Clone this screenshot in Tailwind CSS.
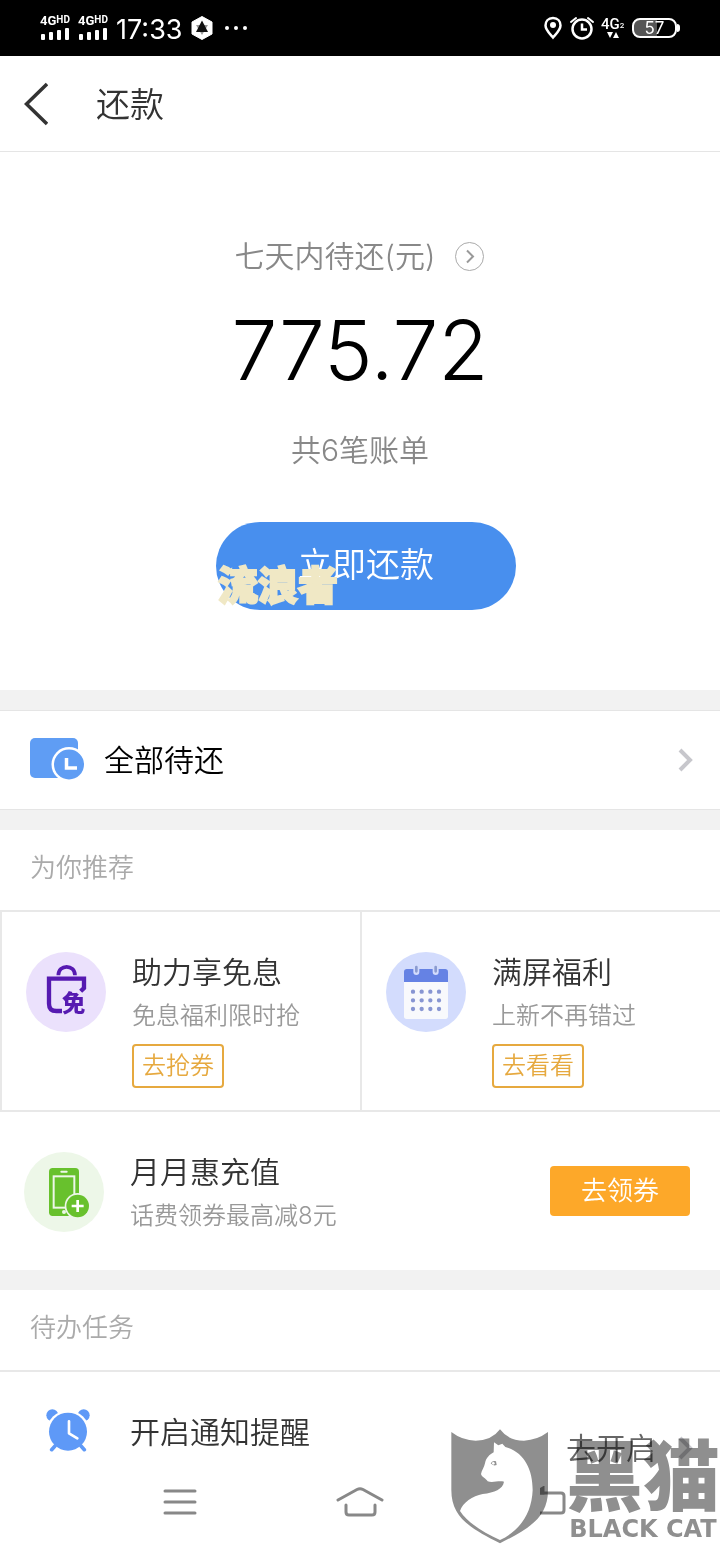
<!DOCTYPE html>
<html lang="zh-CN">
<head>
  <meta charset="UTF-8">
  <meta name="viewport" content="width=device-width, initial-scale=1.0">
  <title>还款</title>
  <script src="https://cdn.jsdelivr.net/npm/@tailwindcss/browser@4"></script>
</head>
<body class="bg-white font-['Inter','Noto_Sans_CJK_SC',sans-serif] font-[350] text-[#333]">

  <!-- Status bar -->
  <div class="flex h-14 items-center justify-between bg-black px-10 text-white">
    <div class="flex items-center gap-2">
      <div class="w-[30px]">
        <p class="flex items-start text-[13px] leading-[12px] font-bold font-['Roboto',sans-serif]">4G<span class="text-[10px] leading-[9px]">HD</span></p>
        <svg class="h-[14px] w-[30px]" viewBox="0 0 30 14" fill="#fff"><rect x="1" y="7" width="4" height="6" rx="1"/><rect x="9" y="5" width="4" height="8" rx="1"/><rect x="17" y="3" width="4" height="10" rx="1"/><rect x="25" y="1" width="4" height="12" rx="1"/></svg>
      </div>
      <div class="w-[30px]">
        <p class="flex items-start text-[13px] leading-[12px] font-bold font-['Roboto',sans-serif]">4G<span class="text-[10px] leading-[9px]">HD</span></p>
        <svg class="h-[14px] w-[30px]" viewBox="0 0 30 14" fill="#fff"><rect x="1" y="7" width="4" height="6" rx="1"/><rect x="9" y="5" width="4" height="8" rx="1"/><rect x="17" y="3" width="4" height="10" rx="1"/><rect x="25" y="1" width="4" height="12" rx="1"/></svg>
      </div>
      <span class="mt-1 text-[27px] leading-8 font-normal">17:33</span>
      <svg class="h-6 w-[22px]" viewBox="0 0 22 24"><path d="M11 0.500 L21 6 V18 L11 23.500 L1 18 V6 Z" fill="#fff" stroke="#fff" stroke-linejoin="round"/><path d="M11 19 L5 9 H17 Z" fill="#999"/><path d="M11 4.500 L17 16 H5 Z" fill="#111"/></svg>
      <svg class="ml-1 h-1 w-6" viewBox="0 0 24 4" fill="#fff"><circle cx="2" cy="2" r="2"/><circle cx="11" cy="2" r="2"/><circle cx="20" cy="2" r="2"/></svg>
    </div>
    <div class="flex items-center gap-[7px]">
      <svg class="h-6 w-5" viewBox="0 0 20 24"><path d="M10 2 C5 2 2.500 5.500 2.500 9.500 C2.500 14 7 18 10 21.500 C13 18 17.500 14 17.500 9.500 C17.500 5.500 15 2 10 2 Z" fill="none" stroke="#fff" stroke-width="2.500"/><circle cx="10" cy="9" r="3" fill="#fff"/></svg>
      <svg class="h-6 w-6" viewBox="0 0 24 24" fill="none" stroke="#fff" stroke-width="2.500"><circle cx="12" cy="13" r="9.500"/><path d="M12 7.500 V13.500 H17"/><path d="M1 6 L6 2 M23 6 L18 2" stroke-linecap="round" stroke-width="2"/></svg>
      <div class="w-6">
        <p class="flex items-end text-[15px] leading-[14px] font-medium font-['Roboto',sans-serif]">4G<span class="text-[8px] leading-[10px]">2</span></p>
        <svg class="h-2 w-6" viewBox="0 0 24 8" fill="#fff"><path d="M6 1 H12 L9 7 Z M12 7 H18 L15 1 Z"/></svg>
      </div>
      <div class="flex items-center">
        <div class="flex h-5 w-[45px] items-center justify-center rounded-lg border-2 border-white bg-linear-to-r from-[#555] from-55% to-black to-55% text-[17px] leading-4 font-normal">57</div>
        <div class="h-2 w-[3px] rounded-r bg-white"></div>
      </div>
    </div>
  </div>

  <!-- Title bar -->
  <header class="flex h-24 items-center gap-12 border-b border-[#e5e5e5] pl-6">
    <button aria-label="返回"><svg class="h-11 w-6" viewBox="0 0 24 44" fill="none" stroke="#333" stroke-width="3.500"><path d="M23 2 L2.500 22 L23 42"/></svg></button>
    <h1 class="pt-0.5 text-[34px] leading-10">还款</h1>
  </header>

  <!-- Amount due -->
  <section class="flex flex-col items-center pt-[84px] pb-20">
    <a href="#" class="flex items-center gap-5 text-[30px] leading-10 text-[#888]">
      七天内待还(元)
      <svg class="h-[30px] w-[30px]" viewBox="0 0 30 30" fill="none" stroke="#aaa"><circle cx="14.500" cy="15.500" r="14"/><path d="M12 9.500 L18 15.500 L12 21.500" stroke="#999" stroke-width="2"/></svg>
    </a>
    <p class="mt-5 text-[82px] leading-[110px] font-light text-black">775.72</p>
    <p class="mt-6 text-[30px] leading-10 text-[#888]">共6笔账单</p>
    <div class="relative mt-[52px] ml-3">
      <button class="h-[88px] w-[300px] rounded-full bg-[#488fee] pb-1 text-[34px] text-white">立即还款</button>
      <span class="absolute top-10 left-0.5 text-[40px] leading-[48px] font-black whitespace-nowrap text-[#f0e8c5] [-webkit-text-stroke:2px_#f0e8c5]">流浪者</span>
    </div>
  </section>

  <!-- All bills -->
  <section class="border-y-[20px] border-[#f2f2f2]">
    <a href="#" class="flex h-[100px] items-center gap-5 border-y border-[#e5e5e5] pr-6 pl-[30px] text-black">
      <svg class="h-11 w-[54px]" viewBox="0 0 54 44"><rect width="48" height="40" rx="5" fill="#5f9df4"/><circle cx="39" cy="26.500" r="17.500" fill="#fff"/><circle cx="39" cy="26.500" r="15" fill="#5f9df4"/><path d="M36.500 20 V30 H47" fill="none" stroke="#fff" stroke-width="3.500"/></svg>
      <span class="flex-1 text-[30px] leading-10">全部待还</span>
      <svg class="h-6 w-5" viewBox="0 0 20 24" fill="none" stroke="#c7c7cc" stroke-width="4"><path d="M4 2 L14 12 L4 22"/></svg>
    </a>
  </section>

  <!-- Recommendations -->
  <section class="border-b-[20px] border-[#f2f2f2]">
    <h2 class="flex h-20 items-center pl-[30px] pb-1.5 text-[26px] text-[#aaa]">为你推荐</h2>
    <div class="grid grid-cols-2 border-y-2 border-[#e8e8e8]">
      <div class="flex h-[198px] gap-[26px] border-l-2 border-[#e8e8e8] pt-10 pl-6">
        <svg class="h-20 w-20 shrink-0" viewBox="0 0 240 240"><circle cx="120" cy="120" r="120" fill="#ebe1fc"/><path d="M97 70 C97 36 147 36 147 70" fill="none" stroke="#561ab1" stroke-width="11"/><path d="M164 118 L174 108 V80 H69 V155 Q69 177 91 177 H108" fill="none" stroke="#561ab1" stroke-width="13"/><text x="108" y="179" font-size="70" font-weight="900" fill="#561ab1">免</text></svg>
        <div>
          <h3 class="text-[30px] leading-10">助力享免息</h3>
          <p class="mt-1 text-[24px] leading-10 text-[#999]">免息福利限时抢</p>
          <button class="mt-2 h-11 w-[92px] rounded border-2 border-[#e6a93f] text-[24px] text-[#e6a93f]">去抢券</button>
        </div>
      </div>
      <div class="flex h-[198px] gap-[26px] border-l-2 border-[#e8e8e8] pt-10 pl-6">
        <svg class="h-20 w-20 shrink-0" viewBox="0 0 240 240"><circle cx="120" cy="120" r="120" fill="#d3dcfd"/><rect x="54" y="51" width="132" height="150" rx="8" fill="#f8f9fc"/><path d="M54 90 V59 Q54 51 62 51 H178 Q186 51 186 59 V90 Z" fill="#6582e4"/><path d="M91 45 V60 M149 45 V60" stroke="#d3dcfd" stroke-width="18" stroke-linecap="round"/><path d="M91 45 V58 M149 45 V58" stroke="#8b9bd0" stroke-width="8" stroke-linecap="round"/><path d="M81 119 H165 M81 145 H165 M81 171 H165" stroke="#8795d2" stroke-width="13" stroke-linecap="round" stroke-dasharray="0 26"/></svg>
        <div>
          <h3 class="text-[30px] leading-10">满屏福利</h3>
          <p class="mt-1 text-[24px] leading-10 text-[#999]">上新不再错过</p>
          <button class="mt-2 h-11 w-[92px] rounded border-2 border-[#e6a93f] text-[24px] text-[#e6a93f]">去看看</button>
        </div>
      </div>
    </div>
    <div class="flex h-[158px] gap-[26px] pt-10 pr-[30px] pl-6">
      <svg class="h-20 w-20 shrink-0" viewBox="0 0 240 240"><circle cx="120" cy="120" r="120" fill="#edf7e8"/><rect x="75" y="48" width="90" height="144" rx="11" fill="#68c12d"/><rect x="89" y="73" width="62" height="94" fill="none" stroke="#edf7e8" stroke-width="6"/><path d="M112 59 H128" stroke="#edf7e8" stroke-width="6" stroke-linecap="round"/><circle cx="120" cy="180" r="6" fill="#edf7e8"/><circle cx="161" cy="162" r="39" fill="#edf7e8"/><circle cx="161" cy="162" r="34" fill="#68c12d"/><path d="M143 162 H179 M161 144 V180" stroke="#fff" stroke-width="8"/></svg>
      <div class="flex-1">
        <h3 class="text-[30px] leading-10">月月惠充值</h3>
        <p class="mt-1 text-[24px] leading-10 text-[#999]">话费领券最高减8元</p>
      </div>
      <button class="mt-3.5 h-[50px] w-[140px] rounded-sm bg-[#fda829] pb-0.5 text-[26px] text-white">去领券</button>
    </div>
  </section>

  <!-- Tasks, with the system navigation under them -->
  <section class="relative overflow-hidden">
    <h2 class="flex h-20 items-center pl-[30px] pb-1.5 text-[26px] text-[#aaa]">待办任务</h2>
    <div class="flex h-[94px] items-start gap-10 border-t-2 border-[#e8e8e8] pt-10 pr-6 pl-[46px]">
      <svg class="-mt-1 h-11 w-11" viewBox="0 0 132 132"><circle cx="19" cy="22" r="18" fill="#5e99f7"/><circle cx="113" cy="22" r="18" fill="#5e99f7"/><circle cx="66" cy="71" r="64" fill="#fff"/><path d="M27 114 L17 125 M105 114 L115 125" stroke="#5e99f7" stroke-width="11" stroke-linecap="round"/><circle cx="66" cy="71" r="57" fill="#5e99f7"/><path d="M69 40 V76 L94 91" fill="none" stroke="#fff" stroke-width="8" stroke-linecap="round" stroke-linejoin="round"/></svg>
      <h3 class="flex-1 text-[30px] leading-10">开启通知提醒</h3>
      <a href="#" class="flex items-center gap-5 pt-4 text-[30px] leading-10 text-[#666]">去开启<svg class="h-6 w-5" viewBox="0 0 20 24" fill="none" stroke="#c7c7cc" stroke-width="4"><path d="M4 2 L14 12 L4 22"/></svg></a>
    </div>
    <nav class="grid h-20 grid-cols-4 items-center pb-1">
      <button aria-label="菜单" class="ml-[180px] justify-self-center"><svg class="h-8 w-9" viewBox="0 0 36 32" stroke="#888" stroke-width="3" stroke-linecap="round"><path d="M3 5 H33 M3 16 H33 M3 27 H33"/></svg></button>
      <button aria-label="主页" class="col-span-2 justify-self-center"><svg class="h-8 w-12" viewBox="0 0 48 32" fill="none" stroke="#888" stroke-width="3" stroke-linecap="round"><path d="M2 14 L21 3.500 Q24 2 27 3.500 L46 14 M10 19 V26 Q10 29 13 29 H36 Q39 29 39 26 V19"/></svg></button>
      <button aria-label="返回上一页"><svg class="h-8 w-9" viewBox="0 0 36 32" fill="none" stroke="#888" stroke-width="3"><path d="M0 7 H21 Q24 7 24 10 V24 Q24 27 21 27 H0"/><path d="M-6 7 L3 2 V7 Z" fill="#888"/></svg></button>
    </nav>

    <!-- Watermark -->
    <svg class="absolute right-[170px] bottom-0 h-[116px] w-[100px]" viewBox="60 54 300 348">
      <path d="M64 66 Q98 92 137 92 Q185 92 210 58 Q235 92 282 92 Q322 90 354 66 V240 C354 322 300 354 210 400 C120 354 64 322 64 240 Z" fill="#8f8f8f" class="mix-blend-multiply"/>
      <path d="M192 97 L205 106 L217 101 L226 111 C282 126 308 178 308 240 C305 318 262 366 210 390 C162 368 112 338 90 303 C98 278 128 258 158 252 C194 247 218 238 222 215 C204 211 188 220 173 214 C168 205 156 202 153 192 C155 181 163 172 165 160 C168 144 178 134 191 127 Z" fill="#fff"/>
      <path d="M182 160 Q189 150 198 154 L200 165 Q189 169 182 160 Z" fill="#8f8f8f"/><circle cx="190" cy="160" r="4" fill="#fff"/>
    </svg>
    <div class="absolute right-0 bottom-0.5 flex flex-col items-center text-[#8f8f8f] mix-blend-multiply">
      <span class="text-[77px] leading-[77px] font-black">黑猫</span>
      <span class="font-['DejaVu_Sans',sans-serif] text-[24px] leading-[26px] font-bold">BLACK CAT</span>
    </div>
  </section>

</body>
</html>
